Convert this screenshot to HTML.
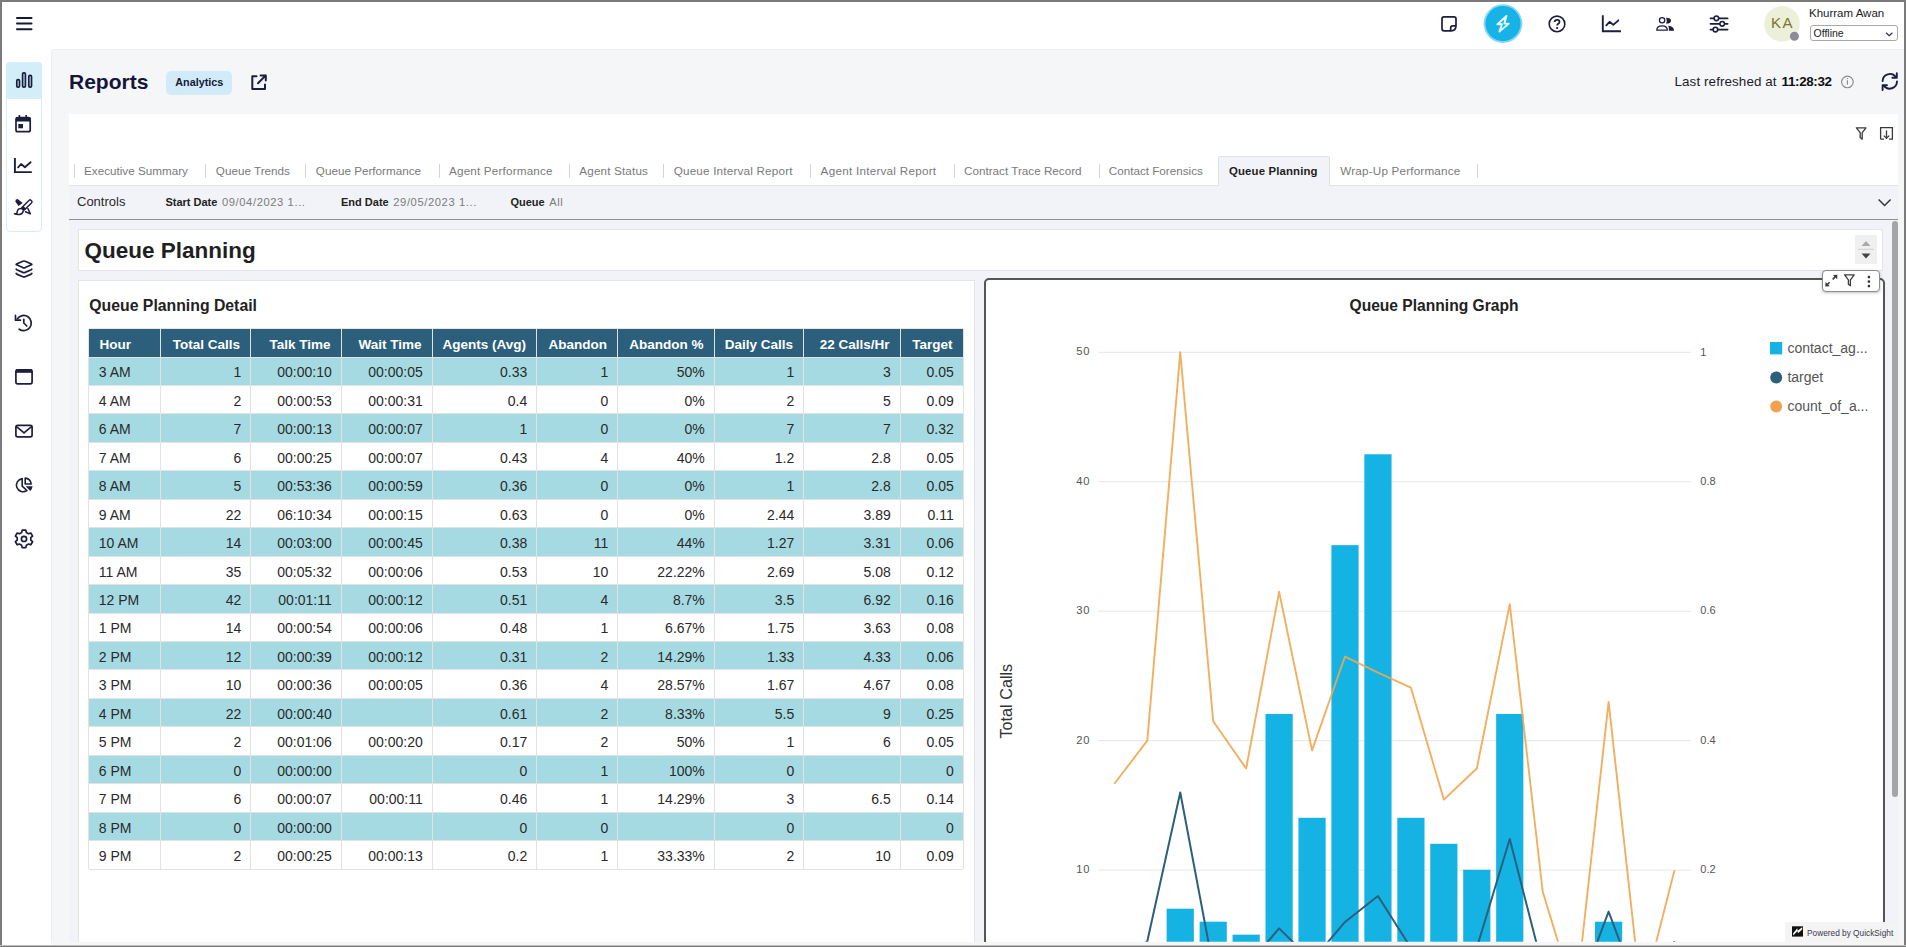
<!DOCTYPE html>
<html><head><meta charset="utf-8">
<style>
*{box-sizing:border-box;margin:0;padding:0}
html,body{width:1906px;height:947px;overflow:hidden;background:#fff;font-family:"Liberation Sans",sans-serif;position:relative}
.a{position:absolute}
svg{position:absolute;overflow:visible}
.bd{position:absolute;background:#7b7b7b;z-index:100}
#content{position:absolute;left:51px;top:49px;width:1870px;height:910px;background:#f5f6f8;border-top:1px solid #eceef0;border-left:1px solid #eceef0;border-top-left-radius:3px}
.tab{position:absolute;top:164px;font-size:11.7px;line-height:14px;color:#7a7a7a;white-space:nowrap}
.sep{position:absolute;top:164px;width:1px;height:14px;background:#d5d5d5}
table.qp{position:absolute;left:89px;top:329px;border-collapse:collapse;font-size:14px;color:#222;table-layout:fixed}
table.qp th{background:#2c5f7b;color:#fff;font-weight:bold;font-size:13.3px;height:28px;padding:0 8px;border-left:1px solid #d9dde0;border-right:1px solid #d9dde0;white-space:nowrap}
table.qp td{height:28.5px;padding:0 8px;border:1px solid #dcdcdc;text-align:right;white-space:nowrap}
table.qp tr:nth-child(even) td{background:#a5d9e2}
table.qp td:first-child{text-align:left}
.hl{height:1px;background:#e2e2e2}
.vl{width:1px;background:#e2e2e2}
.th{font-size:13.5px;line-height:28px;font-weight:bold;color:#fff;white-space:nowrap}
.td{font-size:14px;line-height:28.5px;color:#2a2a2a;white-space:nowrap}
</style></head><body>
<!-- border -->
<div class="bd" style="left:0;top:0;width:1906px;height:2px"></div>
<div class="bd" style="left:0;top:0;width:2px;height:947px"></div>
<div class="bd" style="left:1904px;top:0;width:2px;height:947px"></div>
<div class="bd" style="left:0;top:946px;width:1906px;height:1px"></div><div class="bd" style="left:0;top:945px;width:1906px;height:1px;background:#bdbdbd"></div>

<div id="content"></div>
<!-- ===== HEADER ===== -->
<svg style="left:0;top:0" width="60" height="50">
 <g stroke="#15183a" stroke-width="2" stroke-linecap="round">
  <line x1="17" y1="18" x2="31.5" y2="18"/><line x1="17" y1="23.6" x2="31.5" y2="23.6"/><line x1="17" y1="29.3" x2="31.5" y2="29.3"/>
 </g>
</svg>
<!-- note icon -->
<svg style="left:0;top:0" width="1906" height="50">
 <g fill="none" stroke="#1b1e3c" stroke-width="1.7" stroke-linejoin="round">
  <path d="M1444 16.9 H1454 Q1456 16.9 1456 18.9 V25.8 Q1456 30.8 1451.2 30.8 H1444 Q1442 30.8 1442 28.8 V18.9 Q1442 16.9 1444 16.9 Z"/>
  <path d="M1450.7 30.6 V27.9 Q1450.7 25.9 1452.7 25.9 H1456"/>
 </g>
 <!-- lightning -->
 <circle cx="1503" cy="23.6" r="19.4" fill="#86d7f5"/>
 <circle cx="1503" cy="23.6" r="17.6" fill="#17b3e6"/>
 <path d="M1506.5 16 L1497.4 24.3 L1502 24.3 L1499.4 31.6 L1508.8 23.6 L1504.3 23.6 Z" fill="none" stroke="#e8fdff" stroke-width="1.9" stroke-linejoin="round"/>
 <!-- help -->
 <circle cx="1557" cy="23.9" r="7.8" fill="none" stroke="#1b1e3c" stroke-width="1.6"/>
 <path d="M1554.6 22 Q1554.8 19.8 1557.1 19.8 Q1559.5 19.8 1559.5 21.9 Q1559.5 23.1 1557.9 24.1 Q1557.2 24.6 1557.2 25.4" fill="none" stroke="#1b1e3c" stroke-width="1.8" stroke-linecap="butt"/>
 <rect x="1556.2" y="27.1" width="1.9" height="1.8" fill="#1b1e3c"/>
 <!-- chart -->
 <path d="M1602.8 16.2 V31.2 H1620" fill="none" stroke="#1b1e3c" stroke-width="1.9" stroke-linecap="square"/>
 <path d="M1606.3 25.4 L1609.6 21.8 L1613.3 24.9 L1618.4 20.3" fill="none" stroke="#1b1e3c" stroke-width="1.8" stroke-linecap="round" stroke-linejoin="round"/>
 <!-- people -->
 <circle cx="1662.1" cy="20.25" r="2.65" fill="none" stroke="#1b1e3c" stroke-width="1.3"/>
 <path d="M1656.8 30.2 Q1656.8 25.9 1662 25.9 Q1667.3 25.9 1667.3 30.2 Z" fill="none" stroke="#1b1e3c" stroke-width="1.3" stroke-linejoin="round"/>
 <path d="M1666.1 17.8 A4.9 2.9 0 0 1 1666.1 23.6 Q1667.4 20.7 1666.1 17.8 Z" fill="#1b1e3c"/>
 <path d="M1668.3 25.8 Q1674 26.2 1674 30.8 H1668.9 Q1669 27.5 1668.3 25.8 Z" fill="#1b1e3c"/>
<!-- sliders -->
 <g stroke="#1b1e3c" stroke-width="1.8" stroke-linecap="round">
  <line x1="1710.5" y1="18.3" x2="1727.6" y2="18.3"/><line x1="1710.5" y1="23.8" x2="1727.6" y2="23.8"/><line x1="1710.5" y1="29.6" x2="1727.6" y2="29.6"/>
 </g>
 <g fill="#fff" stroke="#1b1e3c" stroke-width="1.6">
  <circle cx="1716.4" cy="18.3" r="2.3"/><circle cx="1722.2" cy="23.8" r="2.3"/><circle cx="1715.4" cy="29.6" r="2.3"/>
 </g>
 <!-- avatar -->
 <circle cx="1782" cy="23.9" r="17.8" fill="#edf0d9"/>
 <circle cx="1794.4" cy="36.3" r="4.5" fill="#8b8b99"/>
</svg>
<div class="a" style="left:1764px;top:14.3px;width:36px;text-align:center;font-size:15px;line-height:17px;color:#76772c;letter-spacing:1.5px;padding-left:1px">KA</div>
<div class="a" style="left:1809px;top:7px;font-size:11.5px;line-height:13px;color:#222;white-space:nowrap">Khurram Awan</div>
<div class="a" style="left:1809.5px;top:25.4px;width:88.5px;height:15.2px;border:1px solid #a9a9a9;border-radius:3px;background:#fff"></div>
<div class="a" style="left:1813.5px;top:26.7px;font-size:10.5px;line-height:12px;color:#222;white-space:nowrap">Offline</div>
<svg style="left:0;top:0" width="1906" height="50"><path d="M1886 32.8 L1889.2 35.8 L1892.4 32.8" fill="none" stroke="#2a2d55" stroke-width="1.2"/></svg>

<!-- ===== SIDEBAR ===== -->
<div class="a" style="left:6px;top:62px;width:36px;height:170px;border:1px solid #d6edf7;border-radius:4px;background:#fff"></div>
<div class="a" style="left:6px;top:62px;width:36px;height:36.5px;background:#d3eef9;border-radius:4px 4px 0 0"></div>
<svg style="left:0;top:0" width="60" height="560">
 <g fill="none" stroke="#1b1e3c" stroke-width="1.7" stroke-linejoin="round">
  <rect x="16.8" y="79.6" width="2.7" height="7.5" rx="1.2"/>
  <rect x="22.6" y="72.8" width="2.8" height="14.3" rx="1.2"/>
  <rect x="28.8" y="75.4" width="2.7" height="11.7" rx="1.2"/>
 </g>
 <!-- calendar -->
 <rect x="16" y="117.7" width="14.2" height="14" rx="1.8" fill="none" stroke="#1b1e3c" stroke-width="1.7"/>
 <rect x="16" y="117" width="14.2" height="4.5" fill="#1b1e3c"/>
 <rect x="18.3" y="124" width="4.7" height="4.3" fill="#1b1e3c"/>
 <line x1="19.4" y1="115" x2="19.4" y2="118" stroke="#1b1e3c" stroke-width="1.6"/>
 <line x1="26.2" y1="115" x2="26.2" y2="118" stroke="#1b1e3c" stroke-width="1.6"/>
 <!-- line chart -->
 <path d="M14.9 158 V172.1 H31.8" fill="none" stroke="#1b1e3c" stroke-width="1.9"/>
 <path d="M18.1 167.3 L21.1 164 L24.9 167.2 L30.6 162.2" fill="none" stroke="#1b1e3c" stroke-width="1.8" stroke-linejoin="round" stroke-linecap="round"/>
 <!-- design pen -->
 <path d="M15.3 201.4 Q15.3 199.1 17.6 199.1 L22.7 202.9 L18.5 206 Z" fill="#1b1e3c"/>
 <g transform="translate(26.9,205) rotate(-45)">
  <rect x="-6.2" y="-1.75" width="12.4" height="3.5" rx="1.2" fill="none" stroke="#1b1e3c" stroke-width="1.4"/>
  <rect x="-6.2" y="-1.75" width="3" height="3.5" fill="#1b1e3c"/>
 </g>
 <path d="M21.6 208.6 Q18.6 208.4 17.7 210.2 Q17 212 16.8 213.7 H14.4 Q15.6 214.6 19.2 214.5 Q22.4 214.3 23.2 211.2" fill="none" stroke="#1b1e3c" stroke-width="1.5" stroke-linejoin="round" stroke-linecap="round"/>
 <path d="M27.9 208.5 L30.3 213.9 L25.5 211.8" fill="none" stroke="#1b1e3c" stroke-width="1.5" stroke-linejoin="round" stroke-linecap="round"/>
 <!-- layers -->
 <g fill="none" stroke="#1b1e3c" stroke-width="1.7" stroke-linejoin="round" stroke-linecap="round">
  <path d="M24 261 Q24.6 261 25.2 261.3 L31.4 264 Q32.2 264.4 31.4 264.8 L25.2 267.6 Q24 268.1 22.8 267.6 L16.6 264.8 Q15.8 264.4 16.6 264 L22.8 261.3 Q23.4 261 24 261 Z"/>
  <path d="M16.2 269.1 Q16.2 269.5 16.8 269.8 L22.8 272.4 Q24 272.9 25.2 272.4 L31.2 269.8 Q31.8 269.5 31.8 269.1"/>
  <path d="M16.2 273.4 Q16.2 273.8 16.8 274.1 L22.8 276.7 Q24 277.2 25.2 276.7 L31.2 274.1 Q31.8 273.8 31.8 273.4"/>
 </g>
 <!-- history -->
 <g fill="none" stroke="#1b1e3c" stroke-width="1.7" stroke-linecap="round" stroke-linejoin="round">
  <path d="M17.4 318.7 A7.6 7.6 0 1 1 19.2 329.2"/>
  <path d="M15.5 315.4 V320.2 H20.4"/>
  <path d="M23.8 319.3 V323 L26.8 326"/>
 </g>
 <!-- window -->
 <rect x="15.9" y="369.8" width="16.2" height="14" rx="1.8" fill="none" stroke="#1b1e3c" stroke-width="1.7"/>
 <rect x="15.9" y="369.2" width="16.2" height="3.6" fill="#1b1e3c"/>
 <!-- mail -->
 <rect x="15.9" y="425.4" width="16.2" height="11.4" rx="1.8" fill="none" stroke="#1b1e3c" stroke-width="1.7"/>
 <path d="M16.2 426.4 L24 432.8 L31.8 426.4" fill="none" stroke="#1b1e3c" stroke-width="1.7" stroke-linejoin="round"/>
 <!-- pie -->
 <path d="M22.2 478.6 V486.1 L26.9 490.5 A6.6 6.6 0 1 1 22.2 478.6 Z" fill="none" stroke="#1b1e3c" stroke-width="1.6" stroke-linejoin="round"/>
 <path d="M25.2 478.1 V484 H31.2 A6.1 6.1 0 0 0 25.2 478.1 Z" fill="none" stroke="#1b1e3c" stroke-width="1.6" stroke-linejoin="round"/>
 <path d="M25.7 486.2 H32.6 Q32.2 489 30.3 491 Z" fill="#1b1e3c"/>
 <g transform="translate(0,-0.6)"><!-- gear -->
 <path d="M22.2 530.8 H25.8 L26.4 533.2 L28.5 534.4 L30.8 533.6 L32.6 536.7 L30.8 538.3 V540.7 L32.6 542.3 L30.8 545.4 L28.5 544.6 L26.4 545.8 L25.8 548.2 H22.2 L21.6 545.8 L19.5 544.6 L17.2 545.4 L15.4 542.3 L17.2 540.7 V538.3 L15.4 536.7 L17.2 533.6 L19.5 534.4 L21.6 533.2 Z" fill="none" stroke="#1b1e3c" stroke-width="1.7" stroke-linejoin="round"/>
 <circle cx="24" cy="539.5" r="2.6" fill="none" stroke="#1b1e3c" stroke-width="1.7"/>
</g>
</svg>

<!-- ===== PAGE HEADER ===== -->
<div class="a" style="left:69px;top:70px;font-size:21px;line-height:24px;font-weight:bold;color:#14173a;white-space:nowrap">Reports</div>
<div class="a" style="left:166.3px;top:71.1px;width:65.5px;height:23.8px;background:#d1ecf8;border-radius:5px"></div>
<div class="a" style="left:175.3px;top:76px;font-size:10.8px;line-height:12px;font-weight:bold;color:#15193a;white-space:nowrap">Analytics</div>
<svg style="left:0;top:0" width="300" height="100">
 <path d="M256.5 76.2 H252.3 V89 H265 V84.5" fill="none" stroke="#1b1e3c" stroke-width="2" stroke-linejoin="round" stroke-linecap="round"/>
 <path d="M258 83.2 L265.8 75.4 M260.6 75.4 H265.8 V80.6" fill="none" stroke="#1b1e3c" stroke-width="2" stroke-linejoin="round" stroke-linecap="round"/>
</svg>
<div class="a" style="left:1674.5px;top:74px;font-size:13.4px;line-height:15px;color:#1c1c2a;white-space:nowrap;letter-spacing:0.1px">Last refreshed at</div><div class="a" style="left:1781.6px;top:74px;font-size:13.4px;line-height:15px;color:#111;font-weight:bold;white-space:nowrap;letter-spacing:-0.35px">11:28:32</div>
<svg style="left:0;top:0" width="1906" height="100">
 <circle cx="1847.4" cy="81.9" r="5.8" fill="none" stroke="#8a8a8a" stroke-width="1.1"/>
 <line x1="1847.4" y1="80.2" x2="1847.4" y2="84.8" stroke="#8a8a8a" stroke-width="1.1"/>
 <circle cx="1847.4" cy="78.6" r="0.7" fill="#8a8a8a"/>
 <g fill="none" stroke="#1b1e3c" stroke-width="1.9" stroke-linecap="round" stroke-linejoin="round">
  <path d="M1882.6 81 A7.3 7.3 0 0 1 1895.8 77"/>
  <path d="M1897 81.5 A7.3 7.3 0 0 1 1883.8 85.6"/>
  <path d="M1896.8 73.2 V77.8 H1892.4"/>
  <path d="M1882.6 90 V85.2 H1887"/>
 </g>
</svg>
<!-- ===== QUICKSIGHT PANEL ===== -->
<div class="a" style="left:69px;top:114px;width:1829px;height:828px;background:#f2f3f8;overflow:hidden">
</div>
<div class="a" style="left:69px;top:114px;width:1829px;height:71.5px;background:#fff;border-bottom:1px solid #e1e3e6"></div>
<div class="a" style="left:69px;top:219px;width:1829px;height:1.3px;background:#8f9194"></div>
<!-- filter / download icons -->
<svg style="left:0;top:0" width="1906" height="230">
 <path d="M1856.4 127.8 H1866 L1862.2 132.6 V139.2 L1860.2 137.5 V132.6 Z" fill="none" stroke="#3a3a3a" stroke-width="1.3" stroke-linejoin="round"/>
 <path d="M1880.6 139.2 V127.6 H1892.4 V139.2 H1889 M1884 139.2 H1880.6" fill="none" stroke="#3a3a3a" stroke-width="1.3"/>
 <path d="M1886.5 130.5 V138.2 M1883.8 135.6 L1886.5 138.4 L1889.2 135.6" fill="none" stroke="#3a3a3a" stroke-width="1.3"/>
 <path d="M1878.6 199.4 L1884.6 205.6 L1890.6 199.4" fill="none" stroke="#333" stroke-width="1.4"/>
</svg>
<!-- tabs -->
<div class="sep" style="left:74px"></div>
<div class="tab" style="left:84px">Executive Summary</div>
<div class="sep" style="left:205px"></div>
<div class="tab" style="left:215.8px">Queue Trends</div>
<div class="sep" style="left:305px"></div>
<div class="tab" style="left:315.8px">Queue Performance</div>
<div class="sep" style="left:438.5px"></div>
<div class="tab" style="left:449px;letter-spacing:0.18px">Agent Performance</div>
<div class="sep" style="left:569px"></div>
<div class="tab" style="left:579.3px;letter-spacing:0.15px">Agent Status</div>
<div class="sep" style="left:663px"></div>
<div class="tab" style="left:673.7px;letter-spacing:0.19px">Queue Interval Report</div>
<div class="sep" style="left:810px"></div>
<div class="tab" style="left:820.6px;letter-spacing:0.25px">Agent Interval Report</div>
<div class="sep" style="left:954px"></div>
<div class="tab" style="left:964px">Contract Trace Record</div>
<div class="sep" style="left:1098.5px"></div>
<div class="tab" style="left:1108.7px">Contact Forensics</div>
<div class="a" style="left:1218.4px;top:156.2px;width:112px;height:30px;background:#f2f3f8;border:1px solid #dfe1e4;border-bottom:none;border-radius:2px 2px 0 0"></div>
<div class="tab" style="left:1229px;color:#1e1e1e;font-weight:bold;font-size:11.4px;letter-spacing:0.14px">Queue Planning</div>
<div class="tab" style="left:1340.3px;letter-spacing:0.18px">Wrap-Up Performance</div>
<div class="sep" style="left:1477px"></div>
<!-- controls -->
<div class="a" style="left:77px;top:194px;font-size:13px;line-height:15px;color:#2a2a2a;white-space:nowrap">Controls</div>
<div class="a" style="left:165.4px;top:195.5px;font-size:11px;line-height:13px;color:#222;white-space:nowrap"><b>Start Date</b> <span style="color:#7b7b7b;font-size:11.2px;letter-spacing:0.6px;margin-left:1.5px">09/04/2023 1...</span></div>
<div class="a" style="left:341px;top:195.5px;font-size:11px;line-height:13px;color:#222;white-space:nowrap"><b>End Date</b> <span style="color:#7b7b7b;font-size:11.2px;letter-spacing:0.6px;margin-left:1.5px">29/05/2023 1...</span></div>
<div class="a" style="left:510.4px;top:195.5px;font-size:11px;line-height:13px;color:#222;white-space:nowrap"><b>Queue</b> <span style="color:#7b7b7b;font-size:11.2px;letter-spacing:0.6px;margin-left:1.5px">All</span></div>

<!-- title box -->
<div class="a" style="left:78px;top:229px;width:1804.5px;height:41.5px;background:#fff;border:1px solid #e3e4e7"></div>
<div class="a" style="left:84.5px;top:238px;font-size:22.5px;line-height:26px;font-weight:bold;color:#1f1f1f;white-space:nowrap">Queue Planning</div>
<div class="a" style="left:1855px;top:235px;width:21.7px;height:29px;background:#f0f0f0"></div>
<svg style="left:0;top:0" width="1906" height="300">
 <path d="M1861.5 246 L1866 241 L1870.5 246 Z" fill="#a9a9a9"/>
 <line x1="1858" y1="249.3" x2="1874" y2="249.3" stroke="#cfcfcf" stroke-width="1"/>
 <path d="M1861.5 253.5 H1870.5 L1866 258.5 Z" fill="#444"/>
</svg>

<!-- table card -->
<div class="a" style="left:78px;top:280.4px;width:896.5px;height:661.3px;background:#fff;border:1px solid #e3e4e7;border-bottom:none"></div>
<div class="a" style="left:89.3px;top:296px;font-size:15.8px;line-height:19px;font-weight:bold;color:#222;white-space:nowrap">Queue Planning Detail</div>
<!-- table -->
<div class="a" style="left:88.5px;top:329px;width:874.5px;height:28px;background:#2c5f7b"></div>
<div class="a" style="left:88.5px;top:357.0px;width:874.5px;height:28.45px;background:#a6dae3"></div>
<div class="a" style="left:88.5px;top:385.45px;width:874.5px;height:28.45px;background:#fff"></div>
<div class="a" style="left:88.5px;top:413.9px;width:874.5px;height:28.45px;background:#a6dae3"></div>
<div class="a" style="left:88.5px;top:442.35px;width:874.5px;height:28.45px;background:#fff"></div>
<div class="a" style="left:88.5px;top:470.8px;width:874.5px;height:28.45px;background:#a6dae3"></div>
<div class="a" style="left:88.5px;top:499.25px;width:874.5px;height:28.45px;background:#fff"></div>
<div class="a" style="left:88.5px;top:527.7px;width:874.5px;height:28.45px;background:#a6dae3"></div>
<div class="a" style="left:88.5px;top:556.15px;width:874.5px;height:28.45px;background:#fff"></div>
<div class="a" style="left:88.5px;top:584.6px;width:874.5px;height:28.45px;background:#a6dae3"></div>
<div class="a" style="left:88.5px;top:613.05px;width:874.5px;height:28.45px;background:#fff"></div>
<div class="a" style="left:88.5px;top:641.5px;width:874.5px;height:28.45px;background:#a6dae3"></div>
<div class="a" style="left:88.5px;top:669.95px;width:874.5px;height:28.45px;background:#fff"></div>
<div class="a" style="left:88.5px;top:698.4px;width:874.5px;height:28.45px;background:#a6dae3"></div>
<div class="a" style="left:88.5px;top:726.8499999999999px;width:874.5px;height:28.45px;background:#fff"></div>
<div class="a" style="left:88.5px;top:755.3px;width:874.5px;height:28.45px;background:#a6dae3"></div>
<div class="a" style="left:88.5px;top:783.75px;width:874.5px;height:28.45px;background:#fff"></div>
<div class="a" style="left:88.5px;top:812.2px;width:874.5px;height:28.45px;background:#a6dae3"></div>
<div class="a" style="left:88.5px;top:840.65px;width:874.5px;height:28.45px;background:#fff"></div>
<div class="a hl" style="left:88.5px;top:356.5px;width:874.5px"></div>
<div class="a hl" style="left:88.5px;top:384.95px;width:874.5px"></div>
<div class="a hl" style="left:88.5px;top:413.4px;width:874.5px"></div>
<div class="a hl" style="left:88.5px;top:441.85px;width:874.5px"></div>
<div class="a hl" style="left:88.5px;top:470.3px;width:874.5px"></div>
<div class="a hl" style="left:88.5px;top:498.75px;width:874.5px"></div>
<div class="a hl" style="left:88.5px;top:527.2px;width:874.5px"></div>
<div class="a hl" style="left:88.5px;top:555.65px;width:874.5px"></div>
<div class="a hl" style="left:88.5px;top:584.1px;width:874.5px"></div>
<div class="a hl" style="left:88.5px;top:612.55px;width:874.5px"></div>
<div class="a hl" style="left:88.5px;top:641.0px;width:874.5px"></div>
<div class="a hl" style="left:88.5px;top:669.45px;width:874.5px"></div>
<div class="a hl" style="left:88.5px;top:697.9px;width:874.5px"></div>
<div class="a hl" style="left:88.5px;top:726.3499999999999px;width:874.5px"></div>
<div class="a hl" style="left:88.5px;top:754.8px;width:874.5px"></div>
<div class="a hl" style="left:88.5px;top:783.25px;width:874.5px"></div>
<div class="a hl" style="left:88.5px;top:811.7px;width:874.5px"></div>
<div class="a hl" style="left:88.5px;top:840.15px;width:874.5px"></div>
<div class="a hl" style="left:88.5px;top:868.6px;width:874.5px"></div>
<div class="a hl" style="left:88.5px;top:328px;width:874.5px;background:#e6e6e6"></div>
<div class="a vl" style="left:88.0px;top:329px;height:540.1px"></div>
<div class="a vl" style="left:160.0px;top:329px;height:540.1px"></div>
<div class="a vl" style="left:250.0px;top:329px;height:540.1px"></div>
<div class="a vl" style="left:340.5px;top:329px;height:540.1px"></div>
<div class="a vl" style="left:431.5px;top:329px;height:540.1px"></div>
<div class="a vl" style="left:536.0px;top:329px;height:540.1px"></div>
<div class="a vl" style="left:617.0px;top:329px;height:540.1px"></div>
<div class="a vl" style="left:713.5px;top:329px;height:540.1px"></div>
<div class="a vl" style="left:803.0px;top:329px;height:540.1px"></div>
<div class="a vl" style="left:899.5px;top:329px;height:540.1px"></div>
<div class="a vl" style="left:962.5px;top:329px;height:540.1px"></div>
<div class="a th" style="left:99.5px;top:330.7px">Hour</div>
<div class="a th" style="left:160.5px;width:79.5px;top:330.7px;text-align:right">Total Calls</div>
<div class="a th" style="left:250.5px;width:80.0px;top:330.7px;text-align:right">Talk Time</div>
<div class="a th" style="left:341px;width:80.5px;top:330.7px;text-align:right">Wait Time</div>
<div class="a th" style="left:432px;width:94.0px;top:330.7px;text-align:right">Agents (Avg)</div>
<div class="a th" style="left:536.5px;width:70.5px;top:330.7px;text-align:right">Abandon</div>
<div class="a th" style="left:617.5px;width:86.0px;top:330.7px;text-align:right">Abandon %</div>
<div class="a th" style="left:714px;width:79.0px;top:330.7px;text-align:right">Daily Calls</div>
<div class="a th" style="left:803.5px;width:86.0px;top:330.7px;text-align:right">22 Calls/Hr</div>
<div class="a th" style="left:900px;width:52.5px;top:330.7px;text-align:right">Target</div>
<div class="a td" style="left:98.8px;top:358.4px">3 AM</div>
<div class="a td" style="left:160.5px;width:80.8px;top:358.4px;text-align:right">1</div>
<div class="a td" style="left:250.5px;width:81.3px;top:358.4px;text-align:right">00:00:10</div>
<div class="a td" style="left:341px;width:81.8px;top:358.4px;text-align:right">00:00:05</div>
<div class="a td" style="left:432px;width:95.3px;top:358.4px;text-align:right">0.33</div>
<div class="a td" style="left:536.5px;width:71.8px;top:358.4px;text-align:right">1</div>
<div class="a td" style="left:617.5px;width:87.3px;top:358.4px;text-align:right">50%</div>
<div class="a td" style="left:714px;width:80.3px;top:358.4px;text-align:right">1</div>
<div class="a td" style="left:803.5px;width:87.3px;top:358.4px;text-align:right">3</div>
<div class="a td" style="left:900px;width:53.8px;top:358.4px;text-align:right">0.05</div>
<div class="a td" style="left:98.8px;top:386.84999999999997px">4 AM</div>
<div class="a td" style="left:160.5px;width:80.8px;top:386.84999999999997px;text-align:right">2</div>
<div class="a td" style="left:250.5px;width:81.3px;top:386.84999999999997px;text-align:right">00:00:53</div>
<div class="a td" style="left:341px;width:81.8px;top:386.84999999999997px;text-align:right">00:00:31</div>
<div class="a td" style="left:432px;width:95.3px;top:386.84999999999997px;text-align:right">0.4</div>
<div class="a td" style="left:536.5px;width:71.8px;top:386.84999999999997px;text-align:right">0</div>
<div class="a td" style="left:617.5px;width:87.3px;top:386.84999999999997px;text-align:right">0%</div>
<div class="a td" style="left:714px;width:80.3px;top:386.84999999999997px;text-align:right">2</div>
<div class="a td" style="left:803.5px;width:87.3px;top:386.84999999999997px;text-align:right">5</div>
<div class="a td" style="left:900px;width:53.8px;top:386.84999999999997px;text-align:right">0.09</div>
<div class="a td" style="left:98.8px;top:415.29999999999995px">6 AM</div>
<div class="a td" style="left:160.5px;width:80.8px;top:415.29999999999995px;text-align:right">7</div>
<div class="a td" style="left:250.5px;width:81.3px;top:415.29999999999995px;text-align:right">00:00:13</div>
<div class="a td" style="left:341px;width:81.8px;top:415.29999999999995px;text-align:right">00:00:07</div>
<div class="a td" style="left:432px;width:95.3px;top:415.29999999999995px;text-align:right">1</div>
<div class="a td" style="left:536.5px;width:71.8px;top:415.29999999999995px;text-align:right">0</div>
<div class="a td" style="left:617.5px;width:87.3px;top:415.29999999999995px;text-align:right">0%</div>
<div class="a td" style="left:714px;width:80.3px;top:415.29999999999995px;text-align:right">7</div>
<div class="a td" style="left:803.5px;width:87.3px;top:415.29999999999995px;text-align:right">7</div>
<div class="a td" style="left:900px;width:53.8px;top:415.29999999999995px;text-align:right">0.32</div>
<div class="a td" style="left:98.8px;top:443.75px">7 AM</div>
<div class="a td" style="left:160.5px;width:80.8px;top:443.75px;text-align:right">6</div>
<div class="a td" style="left:250.5px;width:81.3px;top:443.75px;text-align:right">00:00:25</div>
<div class="a td" style="left:341px;width:81.8px;top:443.75px;text-align:right">00:00:07</div>
<div class="a td" style="left:432px;width:95.3px;top:443.75px;text-align:right">0.43</div>
<div class="a td" style="left:536.5px;width:71.8px;top:443.75px;text-align:right">4</div>
<div class="a td" style="left:617.5px;width:87.3px;top:443.75px;text-align:right">40%</div>
<div class="a td" style="left:714px;width:80.3px;top:443.75px;text-align:right">1.2</div>
<div class="a td" style="left:803.5px;width:87.3px;top:443.75px;text-align:right">2.8</div>
<div class="a td" style="left:900px;width:53.8px;top:443.75px;text-align:right">0.05</div>
<div class="a td" style="left:98.8px;top:472.2px">8 AM</div>
<div class="a td" style="left:160.5px;width:80.8px;top:472.2px;text-align:right">5</div>
<div class="a td" style="left:250.5px;width:81.3px;top:472.2px;text-align:right">00:53:36</div>
<div class="a td" style="left:341px;width:81.8px;top:472.2px;text-align:right">00:00:59</div>
<div class="a td" style="left:432px;width:95.3px;top:472.2px;text-align:right">0.36</div>
<div class="a td" style="left:536.5px;width:71.8px;top:472.2px;text-align:right">0</div>
<div class="a td" style="left:617.5px;width:87.3px;top:472.2px;text-align:right">0%</div>
<div class="a td" style="left:714px;width:80.3px;top:472.2px;text-align:right">1</div>
<div class="a td" style="left:803.5px;width:87.3px;top:472.2px;text-align:right">2.8</div>
<div class="a td" style="left:900px;width:53.8px;top:472.2px;text-align:right">0.05</div>
<div class="a td" style="left:98.8px;top:500.65px">9 AM</div>
<div class="a td" style="left:160.5px;width:80.8px;top:500.65px;text-align:right">22</div>
<div class="a td" style="left:250.5px;width:81.3px;top:500.65px;text-align:right">06:10:34</div>
<div class="a td" style="left:341px;width:81.8px;top:500.65px;text-align:right">00:00:15</div>
<div class="a td" style="left:432px;width:95.3px;top:500.65px;text-align:right">0.63</div>
<div class="a td" style="left:536.5px;width:71.8px;top:500.65px;text-align:right">0</div>
<div class="a td" style="left:617.5px;width:87.3px;top:500.65px;text-align:right">0%</div>
<div class="a td" style="left:714px;width:80.3px;top:500.65px;text-align:right">2.44</div>
<div class="a td" style="left:803.5px;width:87.3px;top:500.65px;text-align:right">3.89</div>
<div class="a td" style="left:900px;width:53.8px;top:500.65px;text-align:right">0.11</div>
<div class="a td" style="left:98.8px;top:529.1px">10 AM</div>
<div class="a td" style="left:160.5px;width:80.8px;top:529.1px;text-align:right">14</div>
<div class="a td" style="left:250.5px;width:81.3px;top:529.1px;text-align:right">00:03:00</div>
<div class="a td" style="left:341px;width:81.8px;top:529.1px;text-align:right">00:00:45</div>
<div class="a td" style="left:432px;width:95.3px;top:529.1px;text-align:right">0.38</div>
<div class="a td" style="left:536.5px;width:71.8px;top:529.1px;text-align:right">11</div>
<div class="a td" style="left:617.5px;width:87.3px;top:529.1px;text-align:right">44%</div>
<div class="a td" style="left:714px;width:80.3px;top:529.1px;text-align:right">1.27</div>
<div class="a td" style="left:803.5px;width:87.3px;top:529.1px;text-align:right">3.31</div>
<div class="a td" style="left:900px;width:53.8px;top:529.1px;text-align:right">0.06</div>
<div class="a td" style="left:98.8px;top:557.55px">11 AM</div>
<div class="a td" style="left:160.5px;width:80.8px;top:557.55px;text-align:right">35</div>
<div class="a td" style="left:250.5px;width:81.3px;top:557.55px;text-align:right">00:05:32</div>
<div class="a td" style="left:341px;width:81.8px;top:557.55px;text-align:right">00:00:06</div>
<div class="a td" style="left:432px;width:95.3px;top:557.55px;text-align:right">0.53</div>
<div class="a td" style="left:536.5px;width:71.8px;top:557.55px;text-align:right">10</div>
<div class="a td" style="left:617.5px;width:87.3px;top:557.55px;text-align:right">22.22%</div>
<div class="a td" style="left:714px;width:80.3px;top:557.55px;text-align:right">2.69</div>
<div class="a td" style="left:803.5px;width:87.3px;top:557.55px;text-align:right">5.08</div>
<div class="a td" style="left:900px;width:53.8px;top:557.55px;text-align:right">0.12</div>
<div class="a td" style="left:98.8px;top:586.0px">12 PM</div>
<div class="a td" style="left:160.5px;width:80.8px;top:586.0px;text-align:right">42</div>
<div class="a td" style="left:250.5px;width:81.3px;top:586.0px;text-align:right">00:01:11</div>
<div class="a td" style="left:341px;width:81.8px;top:586.0px;text-align:right">00:00:12</div>
<div class="a td" style="left:432px;width:95.3px;top:586.0px;text-align:right">0.51</div>
<div class="a td" style="left:536.5px;width:71.8px;top:586.0px;text-align:right">4</div>
<div class="a td" style="left:617.5px;width:87.3px;top:586.0px;text-align:right">8.7%</div>
<div class="a td" style="left:714px;width:80.3px;top:586.0px;text-align:right">3.5</div>
<div class="a td" style="left:803.5px;width:87.3px;top:586.0px;text-align:right">6.92</div>
<div class="a td" style="left:900px;width:53.8px;top:586.0px;text-align:right">0.16</div>
<div class="a td" style="left:98.8px;top:614.4499999999999px">1 PM</div>
<div class="a td" style="left:160.5px;width:80.8px;top:614.4499999999999px;text-align:right">14</div>
<div class="a td" style="left:250.5px;width:81.3px;top:614.4499999999999px;text-align:right">00:00:54</div>
<div class="a td" style="left:341px;width:81.8px;top:614.4499999999999px;text-align:right">00:00:06</div>
<div class="a td" style="left:432px;width:95.3px;top:614.4499999999999px;text-align:right">0.48</div>
<div class="a td" style="left:536.5px;width:71.8px;top:614.4499999999999px;text-align:right">1</div>
<div class="a td" style="left:617.5px;width:87.3px;top:614.4499999999999px;text-align:right">6.67%</div>
<div class="a td" style="left:714px;width:80.3px;top:614.4499999999999px;text-align:right">1.75</div>
<div class="a td" style="left:803.5px;width:87.3px;top:614.4499999999999px;text-align:right">3.63</div>
<div class="a td" style="left:900px;width:53.8px;top:614.4499999999999px;text-align:right">0.08</div>
<div class="a td" style="left:98.8px;top:642.9px">2 PM</div>
<div class="a td" style="left:160.5px;width:80.8px;top:642.9px;text-align:right">12</div>
<div class="a td" style="left:250.5px;width:81.3px;top:642.9px;text-align:right">00:00:39</div>
<div class="a td" style="left:341px;width:81.8px;top:642.9px;text-align:right">00:00:12</div>
<div class="a td" style="left:432px;width:95.3px;top:642.9px;text-align:right">0.31</div>
<div class="a td" style="left:536.5px;width:71.8px;top:642.9px;text-align:right">2</div>
<div class="a td" style="left:617.5px;width:87.3px;top:642.9px;text-align:right">14.29%</div>
<div class="a td" style="left:714px;width:80.3px;top:642.9px;text-align:right">1.33</div>
<div class="a td" style="left:803.5px;width:87.3px;top:642.9px;text-align:right">4.33</div>
<div class="a td" style="left:900px;width:53.8px;top:642.9px;text-align:right">0.06</div>
<div class="a td" style="left:98.8px;top:671.35px">3 PM</div>
<div class="a td" style="left:160.5px;width:80.8px;top:671.35px;text-align:right">10</div>
<div class="a td" style="left:250.5px;width:81.3px;top:671.35px;text-align:right">00:00:36</div>
<div class="a td" style="left:341px;width:81.8px;top:671.35px;text-align:right">00:00:05</div>
<div class="a td" style="left:432px;width:95.3px;top:671.35px;text-align:right">0.36</div>
<div class="a td" style="left:536.5px;width:71.8px;top:671.35px;text-align:right">4</div>
<div class="a td" style="left:617.5px;width:87.3px;top:671.35px;text-align:right">28.57%</div>
<div class="a td" style="left:714px;width:80.3px;top:671.35px;text-align:right">1.67</div>
<div class="a td" style="left:803.5px;width:87.3px;top:671.35px;text-align:right">4.67</div>
<div class="a td" style="left:900px;width:53.8px;top:671.35px;text-align:right">0.08</div>
<div class="a td" style="left:98.8px;top:699.8px">4 PM</div>
<div class="a td" style="left:160.5px;width:80.8px;top:699.8px;text-align:right">22</div>
<div class="a td" style="left:250.5px;width:81.3px;top:699.8px;text-align:right">00:00:40</div>
<div class="a td" style="left:432px;width:95.3px;top:699.8px;text-align:right">0.61</div>
<div class="a td" style="left:536.5px;width:71.8px;top:699.8px;text-align:right">2</div>
<div class="a td" style="left:617.5px;width:87.3px;top:699.8px;text-align:right">8.33%</div>
<div class="a td" style="left:714px;width:80.3px;top:699.8px;text-align:right">5.5</div>
<div class="a td" style="left:803.5px;width:87.3px;top:699.8px;text-align:right">9</div>
<div class="a td" style="left:900px;width:53.8px;top:699.8px;text-align:right">0.25</div>
<div class="a td" style="left:98.8px;top:728.2499999999999px">5 PM</div>
<div class="a td" style="left:160.5px;width:80.8px;top:728.2499999999999px;text-align:right">2</div>
<div class="a td" style="left:250.5px;width:81.3px;top:728.2499999999999px;text-align:right">00:01:06</div>
<div class="a td" style="left:341px;width:81.8px;top:728.2499999999999px;text-align:right">00:00:20</div>
<div class="a td" style="left:432px;width:95.3px;top:728.2499999999999px;text-align:right">0.17</div>
<div class="a td" style="left:536.5px;width:71.8px;top:728.2499999999999px;text-align:right">2</div>
<div class="a td" style="left:617.5px;width:87.3px;top:728.2499999999999px;text-align:right">50%</div>
<div class="a td" style="left:714px;width:80.3px;top:728.2499999999999px;text-align:right">1</div>
<div class="a td" style="left:803.5px;width:87.3px;top:728.2499999999999px;text-align:right">6</div>
<div class="a td" style="left:900px;width:53.8px;top:728.2499999999999px;text-align:right">0.05</div>
<div class="a td" style="left:98.8px;top:756.6999999999999px">6 PM</div>
<div class="a td" style="left:160.5px;width:80.8px;top:756.6999999999999px;text-align:right">0</div>
<div class="a td" style="left:250.5px;width:81.3px;top:756.6999999999999px;text-align:right">00:00:00</div>
<div class="a td" style="left:432px;width:95.3px;top:756.6999999999999px;text-align:right">0</div>
<div class="a td" style="left:536.5px;width:71.8px;top:756.6999999999999px;text-align:right">1</div>
<div class="a td" style="left:617.5px;width:87.3px;top:756.6999999999999px;text-align:right">100%</div>
<div class="a td" style="left:714px;width:80.3px;top:756.6999999999999px;text-align:right">0</div>
<div class="a td" style="left:900px;width:53.8px;top:756.6999999999999px;text-align:right">0</div>
<div class="a td" style="left:98.8px;top:785.15px">7 PM</div>
<div class="a td" style="left:160.5px;width:80.8px;top:785.15px;text-align:right">6</div>
<div class="a td" style="left:250.5px;width:81.3px;top:785.15px;text-align:right">00:00:07</div>
<div class="a td" style="left:341px;width:81.8px;top:785.15px;text-align:right">00:00:11</div>
<div class="a td" style="left:432px;width:95.3px;top:785.15px;text-align:right">0.46</div>
<div class="a td" style="left:536.5px;width:71.8px;top:785.15px;text-align:right">1</div>
<div class="a td" style="left:617.5px;width:87.3px;top:785.15px;text-align:right">14.29%</div>
<div class="a td" style="left:714px;width:80.3px;top:785.15px;text-align:right">3</div>
<div class="a td" style="left:803.5px;width:87.3px;top:785.15px;text-align:right">6.5</div>
<div class="a td" style="left:900px;width:53.8px;top:785.15px;text-align:right">0.14</div>
<div class="a td" style="left:98.8px;top:813.6px">8 PM</div>
<div class="a td" style="left:160.5px;width:80.8px;top:813.6px;text-align:right">0</div>
<div class="a td" style="left:250.5px;width:81.3px;top:813.6px;text-align:right">00:00:00</div>
<div class="a td" style="left:432px;width:95.3px;top:813.6px;text-align:right">0</div>
<div class="a td" style="left:536.5px;width:71.8px;top:813.6px;text-align:right">0</div>
<div class="a td" style="left:714px;width:80.3px;top:813.6px;text-align:right">0</div>
<div class="a td" style="left:900px;width:53.8px;top:813.6px;text-align:right">0</div>
<div class="a td" style="left:98.8px;top:842.05px">9 PM</div>
<div class="a td" style="left:160.5px;width:80.8px;top:842.05px;text-align:right">2</div>
<div class="a td" style="left:250.5px;width:81.3px;top:842.05px;text-align:right">00:00:25</div>
<div class="a td" style="left:341px;width:81.8px;top:842.05px;text-align:right">00:00:13</div>
<div class="a td" style="left:432px;width:95.3px;top:842.05px;text-align:right">0.2</div>
<div class="a td" style="left:536.5px;width:71.8px;top:842.05px;text-align:right">1</div>
<div class="a td" style="left:617.5px;width:87.3px;top:842.05px;text-align:right">33.33%</div>
<div class="a td" style="left:714px;width:80.3px;top:842.05px;text-align:right">2</div>
<div class="a td" style="left:803.5px;width:87.3px;top:842.05px;text-align:right">10</div>
<div class="a td" style="left:900px;width:53.8px;top:842.05px;text-align:right">0.09</div>
<!-- chart card -->
<div class="a" style="left:984px;top:278px;width:901px;height:700px;background:#fff;border:2px solid #555;border-radius:5px"></div>
<div class="a" style="left:1349.5px;top:296px;font-size:15.6px;line-height:19px;font-weight:bold;color:#222;white-space:nowrap">Queue Planning Graph</div>
<svg style="left:0;top:0" width="1906" height="942" viewBox="0 0 1906 942">
<defs><clipPath id="pc"><rect x="986" y="280" width="897" height="661.7"/></clipPath></defs>
<g clip-path="url(#pc)">
<line x1="1098" y1="870.14" x2="1691" y2="870.14" stroke="#e6e6e6" stroke-width="1"/>
<line x1="1098" y1="740.68" x2="1691" y2="740.68" stroke="#e6e6e6" stroke-width="1"/>
<line x1="1098" y1="611.22" x2="1691" y2="611.22" stroke="#e6e6e6" stroke-width="1"/>
<line x1="1098" y1="481.76" x2="1691" y2="481.76" stroke="#e6e6e6" stroke-width="1"/>
<line x1="1098" y1="352.30" x2="1691" y2="352.30" stroke="#e6e6e6" stroke-width="1"/>
<rect x="1100.75" y="986.62" width="27.2" height="12.98" fill="#14b3e4"/>
<rect x="1133.70" y="973.63" width="27.2" height="25.97" fill="#14b3e4"/>
<rect x="1166.65" y="908.71" width="27.2" height="90.89" fill="#14b3e4"/>
<rect x="1199.60" y="921.70" width="27.2" height="77.90" fill="#14b3e4"/>
<rect x="1232.55" y="934.68" width="27.2" height="64.92" fill="#14b3e4"/>
<rect x="1265.50" y="713.95" width="27.2" height="285.65" fill="#14b3e4"/>
<rect x="1298.45" y="817.82" width="27.2" height="181.78" fill="#14b3e4"/>
<rect x="1331.40" y="545.16" width="27.2" height="454.44" fill="#14b3e4"/>
<rect x="1364.35" y="454.27" width="27.2" height="545.33" fill="#14b3e4"/>
<rect x="1397.30" y="817.82" width="27.2" height="181.78" fill="#14b3e4"/>
<rect x="1430.25" y="843.79" width="27.2" height="155.81" fill="#14b3e4"/>
<rect x="1463.20" y="869.76" width="27.2" height="129.84" fill="#14b3e4"/>
<rect x="1496.15" y="713.95" width="27.2" height="285.65" fill="#14b3e4"/>
<rect x="1529.10" y="973.63" width="27.2" height="25.97" fill="#14b3e4"/>
<rect x="1595.00" y="921.70" width="27.2" height="77.90" fill="#14b3e4"/>
<rect x="1660.90" y="973.63" width="27.2" height="25.97" fill="#14b3e4"/>
<polyline points="1114.35,967.24 1147.30,941.34 1180.25,792.46 1213.20,967.24 1246.15,967.24 1279.10,928.40 1312.05,960.76 1345.00,921.92 1377.95,896.03 1410.90,947.82 1443.85,960.76 1476.80,947.82 1509.75,839.07 1542.70,967.24 1575.65,999.60 1608.60,911.57 1641.55,999.60 1674.50,941.34" fill="none" stroke="#2c5f7b" stroke-width="2" stroke-linejoin="round"/>
<polyline points="1114.35,783.79 1147.30,740.68 1180.25,352.30 1213.20,721.26 1246.15,768.51 1279.10,591.80 1312.05,750.39 1345.00,656.53 1377.95,672.71 1410.90,687.60 1443.85,799.58 1476.80,768.51 1509.75,604.10 1542.70,891.50 1575.65,999.60 1608.60,701.84 1641.55,999.60 1674.50,870.14" fill="none" stroke="#f0a64f" stroke-opacity="0.9" stroke-width="1.9" stroke-linejoin="round"/>
</g>
<text x="1090.3" y="873.24" text-anchor="end" font-family="Liberation Sans" font-size="11.2" letter-spacing="0.8" fill="#555">10</text>
<text x="1700.3" y="873.34" font-family="Liberation Sans" font-size="11" fill="#555">0.2</text>
<text x="1090.3" y="743.78" text-anchor="end" font-family="Liberation Sans" font-size="11.2" letter-spacing="0.8" fill="#555">20</text>
<text x="1700.3" y="743.88" font-family="Liberation Sans" font-size="11" fill="#555">0.4</text>
<text x="1090.3" y="614.32" text-anchor="end" font-family="Liberation Sans" font-size="11.2" letter-spacing="0.8" fill="#555">30</text>
<text x="1700.3" y="614.42" font-family="Liberation Sans" font-size="11" fill="#555">0.6</text>
<text x="1090.3" y="484.86" text-anchor="end" font-family="Liberation Sans" font-size="11.2" letter-spacing="0.8" fill="#555">40</text>
<text x="1700.3" y="484.96" font-family="Liberation Sans" font-size="11" fill="#555">0.8</text>
<text x="1090.3" y="355.40" text-anchor="end" font-family="Liberation Sans" font-size="11.2" letter-spacing="0.8" fill="#555">50</text>
<text x="1700.3" y="355.50" font-family="Liberation Sans" font-size="11" fill="#555">1</text>
<text transform="translate(1011.5,738.5) rotate(-90)" font-family="Liberation Sans" font-size="16.2" fill="#333">Total Calls</text>
<rect x="1770" y="342" width="12.2" height="12.4" fill="#14b3e4"/>
<circle cx="1776.2" cy="377.5" r="6" fill="#2c5f7b"/>
<circle cx="1776.2" cy="406.5" r="6" fill="#f0a34e"/>
<text x="1787.4" y="353.2" font-family="Liberation Sans" font-size="14" fill="#555">contact_ag...</text>
<text x="1787.4" y="382.2" font-family="Liberation Sans" font-size="14" fill="#555">target</text>
<text x="1787.4" y="411.2" font-family="Liberation Sans" font-size="14" fill="#555">count_of_a...</text>
</svg>
<div class="a" style="left:1821.5px;top:269.6px;width:58.8px;height:22px;background:#fff;border:1.5px solid #8c8c8c;border-radius:4px;box-shadow:0 1px 3px rgba(0,0,0,0.25)"></div>
<svg style="left:0;top:0" width="1906" height="300">
 <g fill="none" stroke="#3a3a3a" stroke-width="1.6" stroke-linecap="butt" stroke-linejoin="round">
  <path d="M1832.6 279.4 L1835.6 276.4"/><path d="M1829.6 282.2 L1826.6 285.2"/>
 </g>
 <path d="M1837.4 274.7 L1837.2 279.2 L1832.9 274.9 Z" fill="#3a3a3a"/><path d="M1825.3 286.4 L1825.5 281.9 L1829.8 286.2 Z" fill="#3a3a3a"/>
 <g fill="none" stroke="#3a3a3a" stroke-width="1.3" stroke-linecap="round" stroke-linejoin="round">
  <path d="M1844.6 274.9 H1854.2 L1850.4 279.8 V285.8 L1848.4 284.2 V279.8 Z"/>
 </g>
 <circle cx="1868.9" cy="277.1" r="1.3" fill="#333"/><circle cx="1868.9" cy="281.6" r="1.3" fill="#333"/><circle cx="1868.9" cy="286.1" r="1.3" fill="#333"/>
</svg>
<div class="a" style="left:1892px;top:220.5px;width:6px;height:576px;background:#a4a5a7;border-radius:3px"></div>
<div class="a" style="left:51px;top:941.7px;width:1853px;height:4.3px;background:#f6f6f7"></div>
<div class="a" style="left:1785px;top:921.7px;width:113px;height:20px;background:#f4f4f4"></div>
<svg style="left:0;top:0" width="1906" height="947"><rect x="1792" y="926.3" width="11" height="10.3" fill="#111"/><path d="M1793.2 933.2 L1797.3 928.2 L1797.6 930.8 L1802.2 927.2 V929.4 L1797.9 933.2 L1797.5 930.9 L1793.2 935.6 Z" fill="#fff"/></svg>
<div class="a" style="left:1807px;top:928px;font-size:8.3px;line-height:11px;color:#3a3a4a;white-space:nowrap">Powered by QuickSight</div>
</body></html>
